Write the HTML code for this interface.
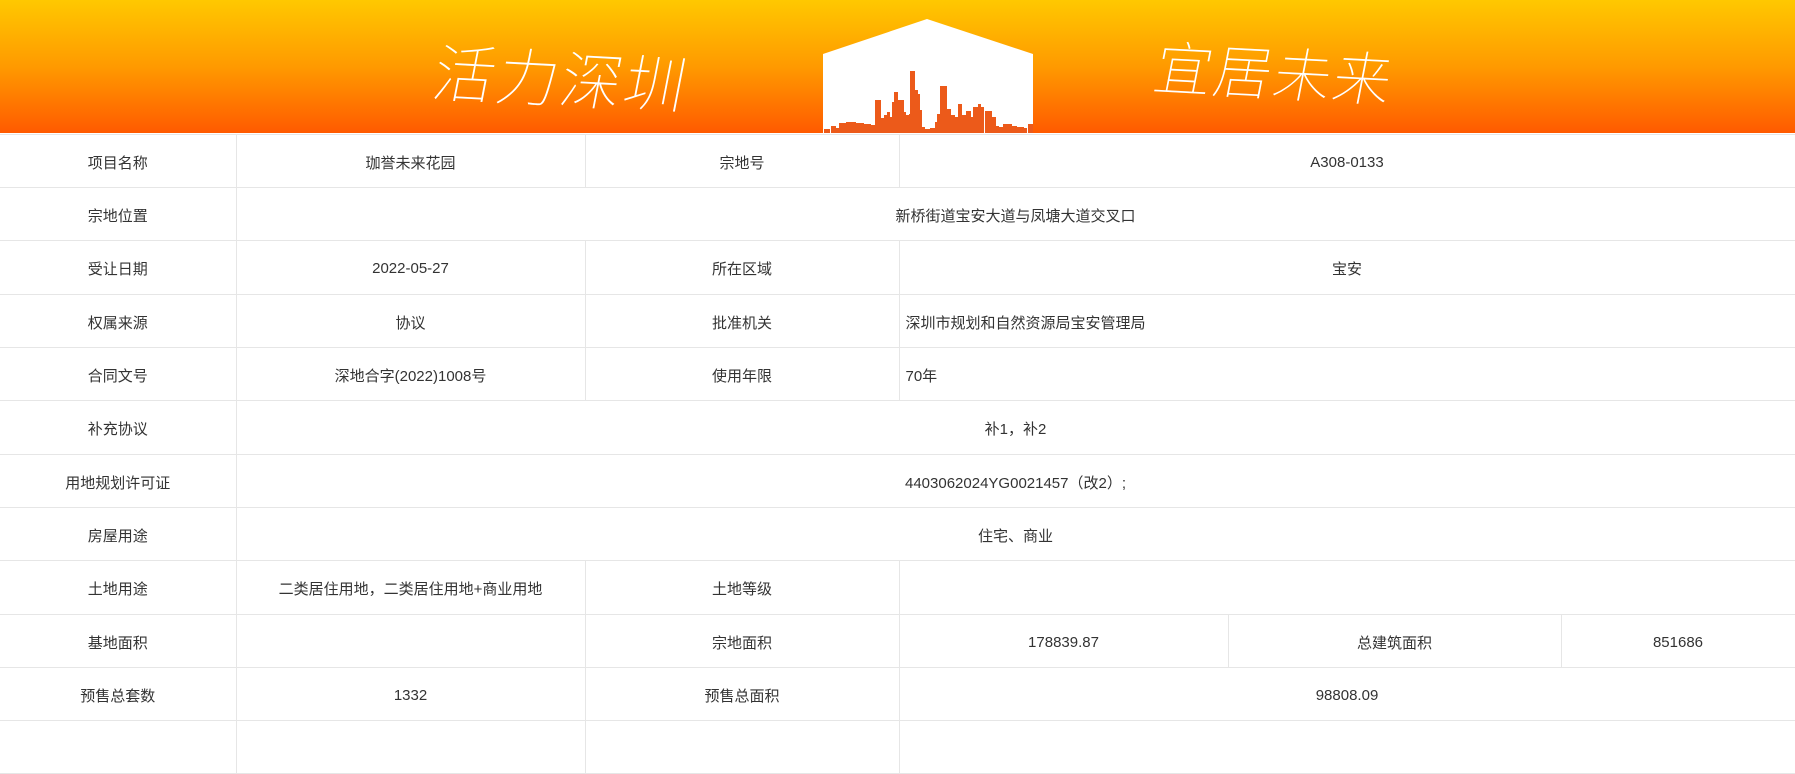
<!DOCTYPE html>
<html><head><meta charset="utf-8"><style>
*{margin:0;padding:0;box-sizing:border-box}
body{width:1795px;height:728px;overflow:hidden;background:#fff;font-family:"Liberation Sans","Noto Sans CJK SC",sans-serif;color:#333;position:relative}
.hd{position:absolute;left:0;top:0;width:1795px;height:133px;background:linear-gradient(#ffc800 0%,#ff9a00 50%,#ff5a00 100%)}
.hw{position:absolute;color:#fff;font-family:"WenQuanYi Zen Hei","Noto Sans CJK SC",sans-serif;font-weight:100;font-size:60px;letter-spacing:2px;transform:skewX(-8deg) rotate(3deg);}
table{position:absolute;left:0;top:134px;width:1795px;border-collapse:collapse;table-layout:fixed}
td{border:1px solid #e6e6e6;text-align:center;font-size:15px;padding:0;vertical-align:middle;border-top:none;padding-top:2px}
tr:first-child td{border-top:1px solid #e6e6e6}
td:first-child{border-left:none}
td.l{text-align:left;padding-left:6px}
</style></head><body>
<div class="hd">
<div class="hw" style="left:434px;top:30px;font-size:62px">活力深圳</div>
<div class="hw" style="left:1155px;top:28px;font-size:58px">宜居未来</div>
<svg style="position:absolute;left:0;top:0" width="1795" height="133">
<polygon points="823,54 927,19 1033,54 1033,133 823,133" fill="#fff"/>
<g fill="#ec5a1a">
<rect x="824" y="129" width="6" height="4"/><rect x="831" y="126" width="5" height="7"/><rect x="836" y="128" width="3" height="5"/><rect x="839" y="123" width="7" height="10"/><rect x="846" y="122" width="10" height="11"/><rect x="856" y="123" width="8" height="10"/><rect x="864" y="124" width="7" height="9"/><rect x="871" y="125" width="4" height="8"/>
<rect x="875" y="100" width="6" height="33"/><rect x="881" y="118" width="3" height="15"/><rect x="884" y="115" width="3" height="18"/><rect x="887" y="112" width="3" height="21"/><rect x="890" y="117" width="2" height="16"/><rect x="892" y="102" width="3" height="31"/><rect x="894" y="92" width="4" height="41"/><rect x="898" y="100" width="6" height="33"/><rect x="904" y="112" width="2" height="21"/><rect x="906" y="115" width="3" height="18"/><rect x="909" y="114" width="2" height="19"/><rect x="910" y="71" width="5" height="62"/><rect x="915" y="90" width="3" height="43"/><rect x="918" y="94" width="2" height="39"/><rect x="920" y="110" width="2" height="23"/>
<rect x="922" y="127" width="3" height="6"/><rect x="925" y="129" width="5" height="4"/><rect x="930" y="128" width="5" height="5"/><rect x="935" y="122" width="2" height="11"/><rect x="937" y="114" width="3" height="19"/><rect x="940" y="86" width="7" height="47"/><rect x="947" y="109" width="4" height="24"/><rect x="951" y="115" width="4" height="18"/><rect x="955" y="117" width="4" height="16"/><rect x="958" y="104" width="4" height="29"/><rect x="962" y="115" width="4" height="18"/><rect x="966" y="111" width="5" height="22"/><rect x="971" y="117" width="2" height="16"/><rect x="973" y="107" width="5" height="26"/><rect x="978" y="104" width="3" height="29"/><rect x="981" y="107" width="3" height="26"/><rect x="985" y="111" width="7" height="22"/><rect x="992" y="117" width="4" height="16"/><rect x="996" y="126" width="3" height="7"/><rect x="999" y="127" width="4" height="6"/><rect x="1003" y="124" width="9" height="9"/><rect x="1012" y="126" width="5" height="7"/><rect x="1017" y="127" width="7" height="6"/><rect x="1024" y="128" width="3" height="5"/><rect x="1028" y="124" width="5" height="9"/>
</g>
</svg>
</div>
<table>
<colgroup><col style="width:236px"><col style="width:349px"><col style="width:314px"><col style="width:329px"><col style="width:333px"><col style="width:234px"></colgroup>
<tr style="height:53px"><td>项目名称</td><td>珈誉未来花园</td><td>宗地号</td><td colspan="3">A308-0133</td></tr>
<tr style="height:53px"><td>宗地位置</td><td colspan="5">新桥街道宝安大道与凤塘大道交叉口</td></tr>
<tr style="height:54px"><td>受让日期</td><td>2022-05-27</td><td>所在区域</td><td colspan="3">宝安</td></tr>
<tr style="height:53px"><td>权属来源</td><td>协议</td><td>批准机关</td><td colspan="3" class="l">深圳市规划和自然资源局宝安管理局</td></tr>
<tr style="height:53px"><td>合同文号</td><td>深地合字(2022)1008号</td><td>使用年限</td><td colspan="3" class="l">70年</td></tr>
<tr style="height:54px"><td>补充协议</td><td colspan="5">补1，补2</td></tr>
<tr style="height:53px"><td>用地规划许可证</td><td colspan="5">4403062024YG0021457（改2）;</td></tr>
<tr style="height:53px"><td>房屋用途</td><td colspan="5">住宅、商业</td></tr>
<tr style="height:54px"><td>土地用途</td><td>二类居住用地，二类居住用地+商业用地</td><td>土地等级</td><td colspan="3"></td></tr>
<tr style="height:53px"><td>基地面积</td><td></td><td>宗地面积</td><td>178839.87</td><td>总建筑面积</td><td>851686</td></tr>
<tr style="height:53px"><td>预售总套数</td><td>1332</td><td>预售总面积</td><td colspan="3">98808.09</td></tr>
<tr style="height:53px"><td></td><td></td><td></td><td colspan="3"></td></tr>
</table>
</body></html>
